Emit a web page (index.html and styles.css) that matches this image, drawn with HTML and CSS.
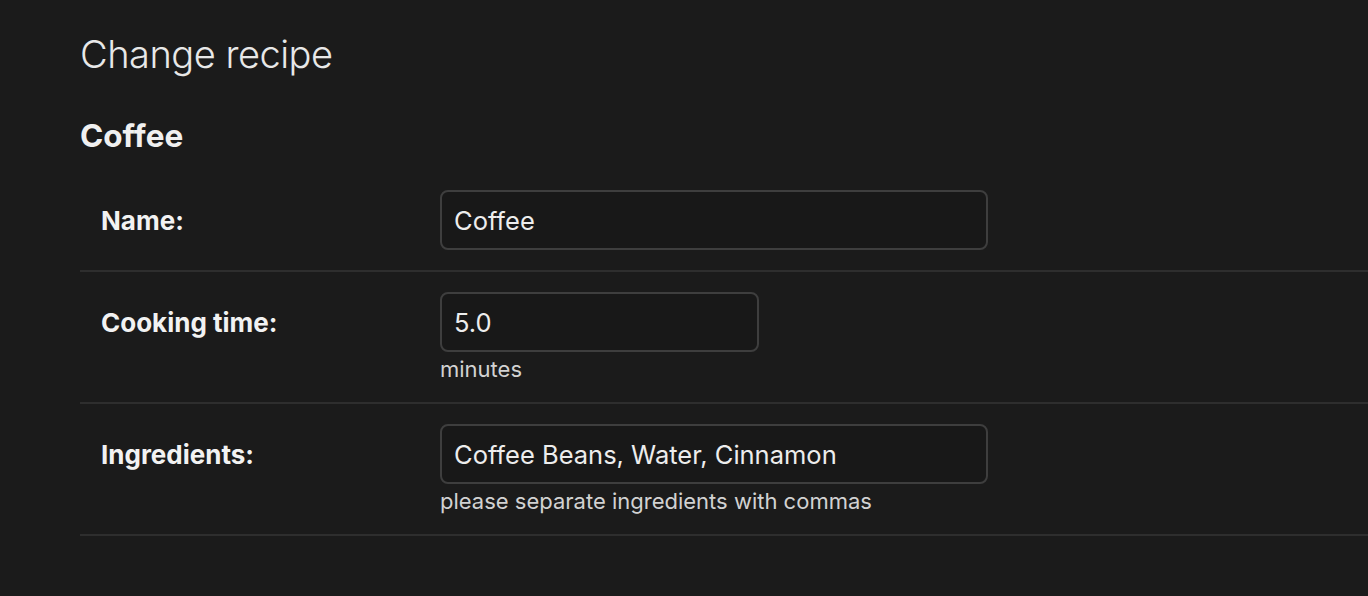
FILE: index.html
```html
<!DOCTYPE html>
<html lang="en">
<head>
<meta charset="utf-8">
<title>Change recipe</title>
<link rel="stylesheet" href="styles.css">
</head>
<body>
<main class="content">
  <h1 class="title">Change recipe</h1>
  <h2 class="subtitle">Coffee</h2>
  <form class="form">
    <div class="form-row">
      <label class="label" for="id_name">Name:</label>
      <div class="field">
        <input class="input input-wide" id="id_name" type="text" value="Coffee">
      </div>
    </div>
    <div class="form-row">
      <label class="label" for="id_time">Cooking time:</label>
      <div class="field">
        <input class="input input-narrow" id="id_time" type="text" value="5.0">
        <div class="help">minutes</div>
      </div>
    </div>
    <div class="form-row">
      <label class="label" for="id_ing">Ingredients:</label>
      <div class="field">
        <input class="input input-wide" id="id_ing" type="text" value="Coffee Beans, Water, Cinnamon">
        <div class="help">please separate ingredients with commas</div>
      </div>
    </div>
  </form>
</main>
</body>
</html>
```
FILE: styles.css
```css
html, body {
  margin: 0;
  padding: 0;
  background: #1b1b1b;
  color: #ededed;
  font-family: Inter, "Noto Sans", "DejaVu Sans", sans-serif;
}

.content {
  padding: 30px 0 0 80px;
}

.title {
  margin: 0;
  font-size: 38px;
  line-height: 48px;
  font-weight: 300;
  color: #e8e8e8;
  letter-spacing: -0.5px;
}

.subtitle {
  margin: 40px 0 16px;
  font-size: 31.5px;
  line-height: 36px;
  font-weight: 700;
  color: #f0f0f0;
}

.form {
  display: flex;
  flex-direction: column;
}

.form-row {
  display: flex;
  align-items: baseline;
  padding: 20px 0 20px 21px;
  border-bottom: 2px solid #2e2e2e;
}

.label {
  width: 339px;
  flex: none;
  font-size: 26px;
  font-weight: 700;
  color: #f2f2f2;
}

.field {
  display: flex;
  flex-direction: column;
  align-items: flex-start;
}

.input {
  box-sizing: border-box;
  height: 60px;
  padding: 0 12px;
  background: #181818;
  border: 2px solid #3e3e3e;
  border-radius: 8px;
  color: #ededed;
  font-family: inherit;
  font-size: 25.5px;
  outline: none;
}

.input-wide {
  width: 548px;
}

.input-narrow {
  width: 319px;
}

.help {
  margin-top: 5px;
  font-size: 22px;
  line-height: 25px;
  color: #d2d2d2;
}
```
